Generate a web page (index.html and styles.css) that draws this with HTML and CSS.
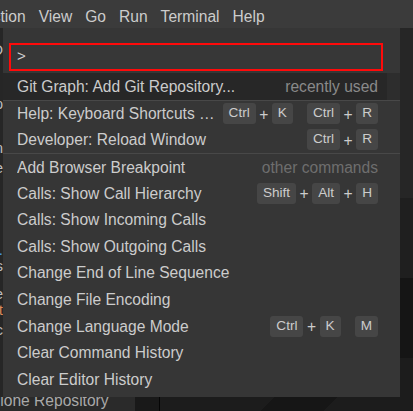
FILE: index.html
```html
<!DOCTYPE html>
<html lang="en">
<head>
<meta charset="utf-8">
<title>Command Palette</title>
<link rel="stylesheet" href="styles.css">
</head>
<body>
<div class="menubar">
  <div class="menu-items">
    <span class="mi">Selection</span>
    <span class="mi">View</span>
    <span class="mi">Go</span>
    <span class="mi">Run</span>
    <span class="mi">Terminal</span>
    <span class="mi">Help</span>
  </div>
</div>
<div class="main">
  <div class="leftcol">
    <div class="midrow">
      <div class="sidestrip">
        <div class="frag f1">OD</div>
        <div class="frag f2">p</div>
        <div class="frag f3">n</div>
        <div class="frag f4">e</div>
        <div class="frag f5 blue">a.</div>
        <div class="frag f6">s</div>
        <div class="frag f7">e</div>
        <div class="frag f8 orange">t</div>
        <div class="frag f9">c</div>
      </div>
      <div class="quick">
        <div class="input"><span class="prompt">&gt;</span></div>
        <div class="list">
          <div class="scroll-thumb"></div>
          <div class="row focused">
            <span class="label">Git Graph: Add Git Repository...</span>
            <span class="group recent">recently used</span>
          </div>
          <div class="row sep">
            <span class="label">Help: Keyboard Shortcuts …</span>
            <span class="keys">
              <span class="chord"><kbd>Ctrl</kbd><span class="plus">+</span><kbd>K</kbd></span>
              <span class="chord"><kbd>Ctrl</kbd><span class="plus">+</span><kbd>R</kbd></span>
            </span>
          </div>
          <div class="row">
            <span class="label">Developer: Reload Window</span>
            <span class="keys">
              <span class="chord"><kbd>Ctrl</kbd><span class="plus">+</span><kbd>R</kbd></span>
            </span>
          </div>
          <div class="row sep">
            <span class="label">Add Browser Breakpoint</span>
            <span class="group other">other commands</span>
          </div>
          <div class="row">
            <span class="label">Calls: Show Call Hierarchy</span>
            <span class="keys">
              <span class="chord"><kbd>Shift</kbd><span class="plus">+</span><kbd>Alt</kbd><span class="plus">+</span><kbd>H</kbd></span>
            </span>
          </div>
          <div class="row"><span class="label">Calls: Show Incoming Calls</span></div>
          <div class="row"><span class="label">Calls: Show Outgoing Calls</span></div>
          <div class="row"><span class="label">Change End of Line Sequence</span></div>
          <div class="row"><span class="label">Change File Encoding</span></div>
          <div class="row">
            <span class="label">Change Language Mode</span>
            <span class="keys">
              <span class="chord"><kbd>Ctrl</kbd><span class="plus">+</span><kbd>K</kbd></span>
              <span class="chord"><kbd>M</kbd></span>
            </span>
          </div>
          <div class="row"><span class="label">Clear Command History</span></div>
          <div class="row"><span class="label">Clear Editor History</span></div>
        </div>
      </div>
    </div>
    <div class="bottom">
      <div class="side-bottom"><span class="clone">Clone Repository</span></div>
      <div class="gap"></div>
      <div class="vline"></div>
      <div class="editor-bg"></div>
    </div>
  </div>
  <div class="rightstrip"></div>
</div>
</body>
</html>
```

FILE: styles.css
```css
* { box-sizing: border-box; }

html, body {
  margin: 0;
  padding: 0;
}

body {
  width: 413px;
  height: 411px;
  overflow: hidden;
  background: #1e1e1e;
  font-family: "Liberation Sans", Arial, sans-serif;
  font-size: 15.6px;
  color: #cccccc;
}

/* ---------- menu bar ---------- */
.menubar {
  height: 28px;
  background: #3b3b3b;
  overflow: hidden;
}

.menu-items {
  display: flex;
  margin-left: -45px;
  white-space: nowrap;
}

.mi {
  padding: 6px 6.5px 0;
  line-height: 22px;
  color: #cccccc;
}

/* ---------- main area ---------- */
.main {
  display: flex;
  height: 383px;
}

.leftcol {
  width: 400px;
  display: flex;
  flex-direction: column;
}

.midrow {
  display: flex;
  height: 369px;
}

.sidestrip {
  width: 3px;
  background: #262626;
  overflow: hidden;
  display: flex;
  flex-direction: column;
  font-size: 15px;
  line-height: 16px;
}

.frag {
  display: flex;
  justify-content: flex-end;
  white-space: nowrap;
  color: #bdbdbd;
}
.f1 { margin-top: 14px; }
.f2 { margin-top: 38px; }
.f3 { margin-top: 28px; }
.f4 { margin-top: 4px; }
.f5 { margin-top: 66px; }
.f6 { margin-top: 0; }
.f7 { margin-top: 12px; }
.f8 { margin-top: 0; }
.f9 { margin-top: 4px; }
.blue { color: #4d9ee6; }
.orange { color: #d98a5a; }

/* ---------- quick pick ---------- */
.quick {
  width: 397px;
  background: #363636;
  padding-top: 15px;
}

.input {
  margin-left: 6px;
  width: 374px;
  height: 28px;
  border: 2px solid #ff0a0a;
  background: #373737;
  padding: 2px 6px 0;
}

.prompt {
  display: block;
  line-height: 18px;
  font-size: 15px;
  color: #d0d0d0;
}

.list {
  position: relative;
  margin-top: 2px;
}

.scroll-thumb {
  position: absolute;
  top: 0;
  right: 0;
  width: 13px;
  height: 26.6px;
  background: #2d2d2d;
  z-index: 1;
}

.row {
  display: flex;
  align-items: center;
  height: 26.6px;
  padding: 2px 22px 0 14px;
  white-space: nowrap;
}

.row.focused {
  background: #272727;
}

.row.sep {
  border-top: 1px solid #484848;
}

.label {
  flex: 1 1 auto;
  min-width: 0;
  overflow: hidden;
  text-overflow: ellipsis;
  line-height: 24px;
}

.group {
  flex: none;
  margin-left: 8px;
}
.group.recent { color: #8a8a8a; }
.group.other { color: #6e6e6e; }

.keys {
  flex: none;
  display: flex;
  align-items: center;
  margin-left: 4px;
  margin-top: -1px;
}

.chord {
  display: flex;
  align-items: center;
}

.chord + .chord {
  margin-left: 14px;
}

kbd {
  display: block;
  height: 21px;
  padding: 0 6px 2px;
  line-height: 19px;
  font-family: "Liberation Sans", Arial, sans-serif;
  font-size: 13.6px;
  color: #cccccc;
  background: #464646;
  border-radius: 3px;
}

.plus {
  margin: 2px 3.5px 0;
  font-size: 15.6px;
  color: #cccccc;
}

/* ---------- bottom strip ---------- */
.bottom {
  display: flex;
  height: 14px;
  overflow: hidden;
}

.side-bottom {
  width: 135px;
  background: #2a2a2a;
  overflow: hidden;
}

.clone {
  display: block;
  margin: -5px 0 0 -11px;
  line-height: 18px;
  white-space: nowrap;
  color: #a9a9a9;
}

.gap {
  width: 24px;
  background: #191919;
}

.vline {
  width: 1px;
  background: #050505;
}

.editor-bg {
  flex: 1;
  background: linear-gradient(135deg, #1c1c1c 0 45%, #161616 45% 70%, #1c1c1c 70%);
}

.rightstrip {
  width: 13px;
  background: linear-gradient(#262626 0 170px, #1f1f1f 170px 250px, #151515 250px 330px, #1c1c1c 330px);
}
```
